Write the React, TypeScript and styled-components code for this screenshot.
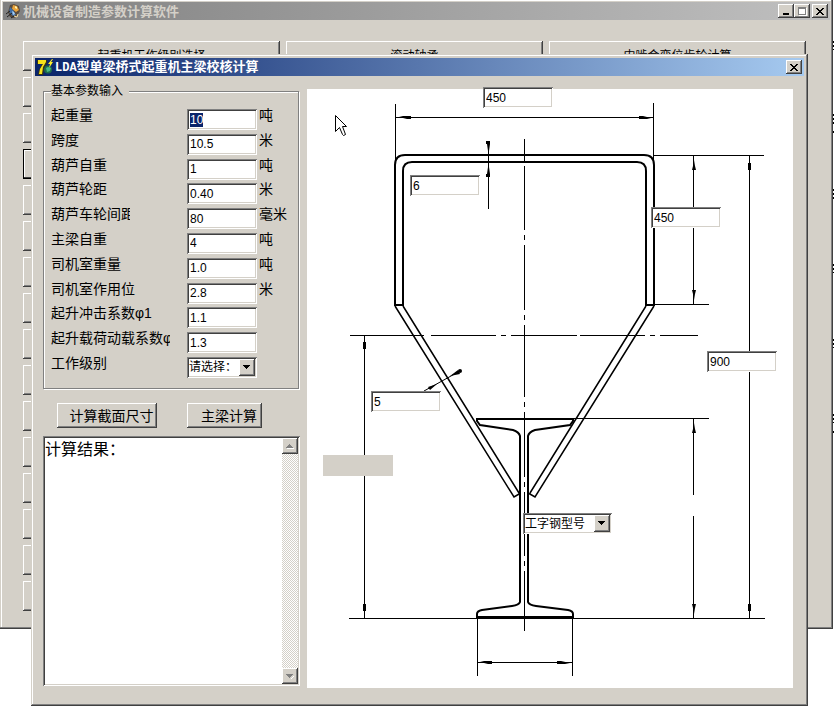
import React, { useEffect, useRef } from "react";
import styled, { createGlobalStyle, css } from "styled-components";

const face = "#d4d0c8";
const shade = "#808080";
const dark = "#404040";
const cjk = `"Liberation Sans", "Noto Sans CJK SC", sans-serif`;

const raised = css`
  border: 0;
  background: ${face};
  box-shadow: inset -1px -1px 0 ${dark}, inset 1px 1px 0 #fff, inset -2px -2px 0 ${shade};
`;

const sunken = css`
  border: 0;
  background: #fff;
  box-shadow: inset 1px 1px 0 ${shade}, inset -1px -1px 0 #fff, inset 2px 2px 0 ${dark}, inset -2px -2px 0 ${face};
`;

const GlobalStyle = createGlobalStyle`
  *, *::before, *::after { box-sizing: border-box; }
  body { margin: 0; background: #fff; color: #000; font: 12px/14px ${cjk}; }
  button, input, select, textarea { margin: 0; padding: 0; font: inherit; color: inherit; border-radius: 0; }
  button:focus, input:focus, select:focus, textarea:focus { outline: none; }
  ::selection { background: #0a246a; color: #fff; }
`;

const Desktop = styled.div`
  position: relative;
  display: flex;
  align-items: flex-start;
  min-height: 100vh;
  overflow: hidden;
`;

const MainWindow = styled.main`
  flex: 1;
  padding: 2px 3px 18px;
  background: ${face};
  box-shadow: inset -1px -1px 0 ${dark}, inset -2px -2px 0 ${shade}, inset 1px 0 0 ${face}, inset 2px 1px 0 #fff;
`;

const Edge = styled.svg`
  display: block;
  flex: none;
`;

const TitleBar = styled.header<{ $active?: boolean }>`
  display: flex;
  align-items: center;
  height: 18px;
  padding: 0 2px;
  background: ${(p) =>
    p.$active ? "linear-gradient(90deg, #0a246a, #a6caf0)" : "linear-gradient(90deg, #808080, #c0c0c0)"};
  color: ${(p) => (p.$active ? "#fff" : face)};
`;

const Title = styled.h1`
  flex: 1;
  margin: 0 0 0 2px;
  font: bold 13px/18px "Noto Sans CJK SC", sans-serif;
  white-space: nowrap;
`;

const Latin = styled.span`
  font: bold 12px/18px "Liberation Mono", monospace;
`;

const CaptionButton = styled.button<{ $apart?: boolean }>`
  ${raised}
  display: grid;
  place-items: center;
  width: 16px;
  height: 14px;
  margin-left: ${(p) => (p.$apart ? "2px" : "0")};
`;

const ModuleGrid = styled.div`
  display: grid;
  grid-template-columns: repeat(3, 1fr);
  grid-auto-rows: 30px;
  gap: 6px;
  padding: 21px 24px 0 20px;
`;

const ModuleButton = styled.button<{ $first?: boolean; $current?: boolean }>`
  ${raised}
  ${(p) => p.$first && "grid-column: 1;"}
  ${(p) =>
    p.$current &&
    css`
      box-shadow: inset 0 0 0 1px #000, inset -2px -2px 0 ${dark}, inset 2px 2px 0 #fff;
    `}
`;

const Dialog = styled.section`
  position: absolute;
  top: 54px;
  left: 31px;
  right: 26px;
  padding: 4px;
  background: ${face};
  box-shadow: inset -1px -1px 0 ${dark}, inset 1px 1px 0 ${face}, inset -2px -2px 0 ${shade}, inset 2px 2px 0 #fff;
`;

const DialogBody = styled.div`
  display: flex;
  gap: 7px;
  padding: 8px 11px 14px 8px;
`;

const SideColumn = styled.form`
  display: flex;
  flex: none;
  flex-direction: column;
  width: 257px;
  padding-bottom: 2px;
`;

const Group = styled.fieldset`
  min-width: 0;
  margin: 0 1px 0 0;
  padding: 11px 7px 10px;
  border: 1px solid ${shade};
  box-shadow: 1px 1px 0 #fff, inset 1px 1px 0 #fff;
`;

const Legend = styled.legend`
  width: 78px;
  padding: 0;
  background: ${face};
  white-space: nowrap;
`;

const Rows = styled.div`
  display: flex;
  flex-direction: column;
  justify-content: space-between;
  height: 269px;
`;

const Row = styled.div`
  display: flex;
  align-items: flex-start;
  font-size: 14px;
  line-height: 12px;
`;

const RowLabel = styled.label<{ $narrow?: boolean }>`
  flex: none;
  width: ${(p) => (p.$narrow ? "79px" : "119px")};
  margin-right: ${(p) => (p.$narrow ? "57px" : "17px")};
  overflow-x: clip;
  white-space: nowrap;
`;

const Unit = styled.span`
  margin-left: 2px;
`;

const Field = styled.input`
  ${sunken}
  display: block;
  width: 70px;
  height: 21px;
  padding: 0 3px;
  font: 12px/14px ${cjk};
`;

const ComboBox = styled.span<{ $wide?: boolean }>`
  ${sunken}
  display: flex;
  width: ${(p) => (p.$wide ? "89px" : "70px")};
  height: 21px;
  padding: 2px;
  position: relative;
`;

const ComboSelect = styled.select`
  width: 100%;
  padding: 0 16px 0 0;
  border: 0;
  background: transparent;
  appearance: none;
  font: 12px/16px ${cjk};
`;

const ComboArrow = styled.span`
  ${raised}
  position: absolute;
  top: 2px;
  right: 2px;
  display: grid;
  place-items: center;
  width: 16px;
  height: 17px;
  pointer-events: none;
`;

const Actions = styled.div`
  display: flex;
  gap: 30px;
  padding: 14px 14px 8px;
`;

const ActionButton = styled.button<{ $wide?: boolean }>`
  ${raised}
  width: ${(p) => (p.$wide ? "100px" : "75px")};
  height: 25px;
  padding: 0 3px 0 12px;
  font-size: 14px;
  white-space: nowrap;
`;

const Memo = styled.div`
  ${sunken}
  display: flex;
  flex: 1;
  padding: 2px;
`;

const MemoText = styled.textarea`
  flex: 1;
  min-width: 0;
  padding: 3px 0;
  border: 0;
  background: transparent;
  resize: none;
  font: 16px/18px ${cjk};
`;

const ScrollTrack = styled.div`
  display: flex;
  flex-direction: column;
  justify-content: space-between;
  width: 16px;
  background: repeating-conic-gradient(#fff 0 25%, ${face} 0 50%) 0 0 / 2px 2px;
`;

const ScrollButton = styled.button`
  ${raised}
  display: grid;
  place-items: center;
  width: 16px;
  height: 16px;
`;

const DrawingPanel = styled.div`
  position: relative;
  flex: 1;
  margin-top: 5px;
  background: #fff;
`;

const Drawing = styled.svg`
  display: block;
`;

const Pin = styled.div<{ $x: number; $y: number }>`
  position: absolute;
  left: ${(p) => p.$x}px;
  top: ${(p) => p.$y}px;
`;

const Blank = styled.div`
  width: 70px;
  height: 21px;
  background: ${face};
`;

const CloseGlyph = () => (
  <svg width="8" height="7" viewBox="0 0 8 7" shapeRendering="crispEdges">
    <path d="M0 0h2v1h1v1h2V1h1V0h2v1H7v1H6v1H5v1h1v1h1v1h1v1H6V6H5V5H3v1H2v1H0V6h1V5h1V4h1V3H2V2H1V1H0z" />
  </svg>
);

const Triangle = ({ up, color = "#000" }: { up?: boolean; color?: string }) => (
  <svg width="8" height="5" viewBox="0 0 8 5" shapeRendering="crispEdges">
    {color !== "#000" && <path d={up ? "M1 4h7v1H1z" : "M8 1v1L5 5H4z"} fill="#fff" />}
    <path d={up ? "M3 0h1v1h1v1h1v1h1v1H0V3h1V2h1V1h1z" : "M0 0h7v1H6v1H5v1H4v1H3V3H2V2H1V1H0z"} fill={color} />
  </svg>
);

const TorchIcon = () => (
  <svg width="16" height="16" viewBox="0 0 16 16">
    <path d="M5 2l4-1 5 2 1 5-3 5-3 2-4-1-2-5z" fill="#5a4b3c" />
    <path d="M8 2l4 1 2 4-3 2-4-3z" fill="#e8a23a" />
    <path d="M10 3l2 1v2l-2-1z" fill="#fff3b0" />
    <path d="M5 4l3 3 3 5-3 1-4-4z" fill="#3d6ea8" />
    <path d="M7 8l2 1 1 2-2 1z" fill="#a8cdf0" />
    <path d="M1 11l4-3M2 14l5-4M6 15l3-2" stroke="#202020" strokeWidth="1" />
    <path d="M9 13l3 1 1-3" fill="none" stroke="#f0d8a0" />
  </svg>
);

const SevenIcon = () => (
  <svg width="16" height="16" viewBox="0 0 16 16">
    <circle cx="11" cy="10.5" r="4" fill="#1d6b4a" />
    <path d="M9 9l2-1 3 1-1 3-3 1z" fill="#48b884" />
    <path d="M0 1h10v3L7 9l-1 7H1l1-5 3-6H0z" fill="#3b3510" />
    <path d="M1 1h8v2L6 8l-1 7H2l1-5 3-5H1z" fill="#f5e21c" />
    <path d="M15 0l-4 5h2l-1 4 4-6h-2l2-3z" fill="#fff02a" />
  </svg>
);

const fields: { id: string; label: string; value: string; unit?: string; narrow?: boolean }[] = [
  { id: "load", label: "起重量", value: "10", unit: "吨" },
  { id: "span", label: "跨度", value: "10.5", unit: "米" },
  { id: "hoist", label: "葫芦自重", value: "1", unit: "吨" },
  { id: "base", label: "葫芦轮距", value: "0.40", unit: "米" },
  { id: "wheel", label: "葫芦车轮间距", value: "80", unit: "毫米", narrow: true },
  { id: "girder", label: "主梁自重", value: "4", unit: "吨" },
  { id: "cab", label: "司机室重量", value: "1.0", unit: "吨" },
  { id: "cabpos", label: "司机室作用位", value: "2.8", unit: "米" },
  { id: "phi1", label: "起升冲击系数φ1", value: "1.1" },
  { id: "phi2", label: "起升载荷动载系数φ", value: "1.3" },
];

const dimensions = [
  { name: "上盖板宽度", value: "450", x: 176, y: -2 },
  { name: "盖板厚度", value: "6", x: 103, y: 86 },
  { name: "侧板高度", value: "450", x: 344, y: 118 },
  { name: "斜板厚度", value: "5", x: 64, y: 302 },
  { name: "总高度", value: "900", x: 400, y: 262 },
];

const Combo = ({ id, name, text, wide }: { id: string; name?: string; text: string; wide?: boolean }) => (
  <ComboBox $wide={wide}>
    <ComboSelect id={id} aria-label={name}>
      <option>{text}</option>
    </ComboSelect>
    <ComboArrow>
      <Triangle />
    </ComboArrow>
  </ComboBox>
);

/* Box girder section; the view box starts at the panel's place in the window. */
const Section = () => (
  <Drawing width="486" height="599" viewBox="307 89 486 599" fill="none" stroke="#000">
    <g strokeWidth="1" shapeRendering="crispEdges">
      <path d="M395.5 104V160M653.5 103V160M395 117.5H654" />
      <path d="M654 155.5H764M654 304.5H709M693.5 155V304M749.5 155V618" />
      <path d="M488.5 142V209M364.5 336V618M349 618.5H765" />
      <path d="M573 418.5H709M693.5 419V495M693.5 516V618" />
      <path d="M477.5 618V676M572.5 618V676M477 662.5H573" />
      <path d="M524.5 139V162M524.5 166V230M524.5 235V240M524.5 245V310M524.5 315V320M524.5 325V397M524.5 402V407M524.5 412V477M524.5 482V487M524.5 492V556M524.5 561V566M524.5 571V631" />
      <path d="M350 335.5H424M431 335.5H496M501 335.5H506M511 335.5H577M580 335.5H645M650 335.5H655M660 335.5H698" />
    </g>
    <g strokeWidth="2">
      <path d="M395 305V165Q395 155 405 155H644Q654 155 654 165V305" />
      <path d="M403 305V171Q403 162 412 162H637Q646 162 646 171V305" />
      <path d="M394 305H404M645 305H655" />
      <path d="M520 497V436Q519 432 513 430L480 425L477 421V419H573V421L570 425L535 430Q529 432 528 436V602Q529 605 536 606L568 610Q573 611 573 614V617H477V614Q477 611 482 610L512 606Q519 605 520 602V497" />
    </g>
    <g strokeWidth="1.5">
      <path d="M395 306L514 497L520 493.5M403 306L519 493" />
      <path d="M654 306L535 497L529 493.5M646 306L530 493" />
    </g>
    <path d="M424 391L460 371" />
    <g fill="#000" stroke="none">
      <path d="M399 117L403 116H411V119H407zM651 118L647 119H639V116H643z" />
      <path d="M486 141h4v3l-1 7h-1l-1-7h-1zM486 177h4v-3l-1-7h-1l-1 7h-1z" />
      <path d="M693 160h1l1 6 1 4h-4l1-4zM693 300h1l1-6 1-4h-4l1 4z" />
      <path d="M748 163h3v7h-3zM748 604h3v7h-3z" />
      <path d="M363 342h3v7h-3zM363 604h3v7h-3z" />
      <path d="M693 423h1l1 6 1 4h-4l1-4zM693 614h1l1-6 1-4h-4l1 4z" />
      <path d="M480 662L484 661H492V664H488zM570 663L565 664H557V661H561z" />
      <path d="M437 384L428 387L430 390zM450 376L458 370L460 374z" />
      <circle cx="460" cy="371" r="2" />
    </g>
    <path
      d="M335.500 115.500V131.500L339.500 127.500L342.500 134.500L343.500 135.500L345.500 134.500L342.500 126.500H346.500z"
      fill="#fff"
    />
  </Drawing>
);

export default function App() {
  const first = useRef<HTMLInputElement>(null);

  useEffect(() => {
    first.current?.focus({ preventScroll: true });
    first.current?.select();
  }, []);

  return (
    <>
      <GlobalStyle />
      <Desktop>
        <MainWindow>
          <TitleBar>
            <TorchIcon />
            <Title>机械设备制造参数计算软件</Title>
            <CaptionButton aria-label="最小化">
              <svg width="8" height="7" viewBox="0 0 8 7">
                <path d="M1 5h6v2H1z" />
              </svg>
            </CaptionButton>
            <CaptionButton aria-label="最大化">
              <svg width="9" height="9" viewBox="0 0 9 9" shapeRendering="crispEdges">
                <path d="M1 1h8v8H1z" fill="#fff" />
                <path d="M0 0h8v8H0zM1 2v5h6V2z" fill="#808080" fillRule="evenodd" />
              </svg>
            </CaptionButton>
            <CaptionButton $apart aria-label="关闭">
              <CloseGlyph />
            </CaptionButton>
          </TitleBar>
          <ModuleGrid>
            <ModuleButton>起重机工作级别选择</ModuleButton>
            <ModuleButton>滚动轴承</ModuleButton>
            <ModuleButton>内啮合变位齿轮计算</ModuleButton>
            {Array.from({ length: 15 }, (_, i) => (
              <ModuleButton key={i} $first $current={i === 2} />
            ))}
          </ModuleGrid>
        </MainWindow>
        <Edge width="1" height="709" viewBox="0 0 1 709" shapeRendering="crispEdges">
          <path
            d="M.5 41V50M.5 114V125M.5 131V135M.5 189V199M.5 264V273M.5 339V348M.5 414V423M.5 431V435"
            stroke="#000"
            strokeDasharray="2 2"
          />
        </Edge>
        <Dialog role="dialog" aria-labelledby="dialog-title">
          <TitleBar $active>
            <SevenIcon />
            <Title as="h2" id="dialog-title">
              <Latin>LDA</Latin>型单梁桥式起重机主梁校核计算
            </Title>
            <CaptionButton aria-label="关闭">
              <CloseGlyph />
            </CaptionButton>
          </TitleBar>
          <DialogBody>
            <SideColumn onSubmit={(e) => e.preventDefault()}>
              <Group>
                <Legend>基本参数输入</Legend>
                <Rows>
                  {fields.map((f, i) => (
                    <Row key={f.id}>
                      <RowLabel htmlFor={f.id} $narrow={f.narrow}>
                        {f.label}
                      </RowLabel>
                      <Field id={f.id} ref={i === 0 ? first : undefined} defaultValue={f.value} />
                      {f.unit && <Unit>{f.unit}</Unit>}
                    </Row>
                  ))}
                  <Row>
                    <RowLabel htmlFor="grade">工作级别</RowLabel>
                    <Combo id="grade" text="请选择：" />
                  </Row>
                </Rows>
              </Group>
              <Actions>
                <ActionButton type="button" $wide>
                  计算截面尺寸
                </ActionButton>
                <ActionButton type="button">主梁计算</ActionButton>
              </Actions>
              <Memo>
                <MemoText aria-label="计算结果" defaultValue="计算结果：" />
                <ScrollTrack>
                  <ScrollButton type="button" aria-label="向上滚动">
                    <Triangle up color="#808080" />
                  </ScrollButton>
                  <ScrollButton type="button" aria-label="向下滚动">
                    <Triangle color="#808080" />
                  </ScrollButton>
                </ScrollTrack>
              </Memo>
            </SideColumn>
            <DrawingPanel>
              <Section />
              {dimensions.map((d) => (
                <Pin key={d.name} $x={d.x} $y={d.y}>
                  <Field aria-label={d.name} defaultValue={d.value} />
                </Pin>
              ))}
              <Pin $x={16} $y={366}>
                <Blank />
              </Pin>
              <Pin $x={216} $y={424}>
                <Combo id="beam" name="工字钢型号" text="工字钢型号" wide />
              </Pin>
            </DrawingPanel>
          </DialogBody>
        </Dialog>
      </Desktop>
    </>
  );
}
